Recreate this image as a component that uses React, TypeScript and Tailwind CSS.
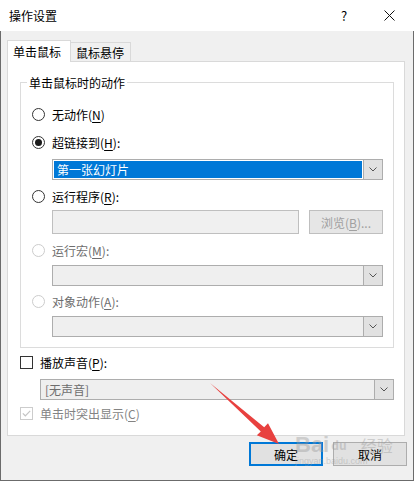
import React from 'react';

const Acc = ({ k }: { k: string }) => <span className="underline underline-offset-[2px]">{k}</span>;

function Radio({ checked, disabled }: { checked?: boolean; disabled?: boolean }) {
  return (
    <span
      className={
        'w-[13px] h-[13px] rounded-full border bg-white flex items-center justify-center shrink-0 ' +
        (disabled ? 'border-[#cccccc]' : 'border-[#333333]')
      }
    >
      {checked && <span className="w-[7px] h-[7px] rounded-full bg-[#1a1a1a]" />}
    </span>
  );
}

function Checkbox({ checked, disabled }: { checked?: boolean; disabled?: boolean }) {
  return (
    <span
      className={
        'w-[13px] h-[13px] border bg-white flex items-center justify-center shrink-0 ' +
        (disabled ? 'border-[#cccccc]' : 'border-[#333333]')
      }
    >
      {checked && (
        <svg width="9" height="7" viewBox="0 0 9 7">
          <path d="M0.8 3.4 L3.3 5.8 L8.2 0.8" fill="none" stroke={disabled ? '#c4c4c4' : '#333'} strokeWidth="1.2" />
        </svg>
      )}
    </span>
  );
}

function Chevron() {
  return (
    <svg width="8" height="5" viewBox="0 0 8 5">
      <path d="M0.5 0.5 L4 4 L7.5 0.5" fill="none" stroke="#555" strokeWidth="1" />
    </svg>
  );
}

function Combo({ text, selected, disabled }: { text?: string; selected?: boolean; disabled?: boolean }) {
  return (
    <div className="flex h-[21px] border border-[#adadad]">
      <div className={'flex-1 p-px ' + (disabled ? 'bg-[#efefef]' : 'bg-white')}>
        {text && (
          <div
            className={
              'h-full flex items-center pl-[3px] ' +
              (selected ? 'bg-[#0078d7] text-white' : 'text-[#6d6d6d]')
            }
          >
            {text}
          </div>
        )}
      </div>
      <div className="w-[19px] bg-[#e1e1e1] border-l border-[#adadad] flex items-center justify-center">
        <Chevron />
      </div>
    </div>
  );
}

function RadioRow({ label, k, checked, disabled, colon = true }: { label: string; k: string; checked?: boolean; disabled?: boolean; colon?: boolean }) {
  return (
    <div className={'flex items-center h-[20px] gap-[7px] ' + (disabled ? 'text-[#6d6d6d]' : '')}>
      <Radio checked={checked} disabled={disabled} />
      <span>
        {label}(<Acc k={k} />){colon ? ':' : ''}
      </span>
    </div>
  );
}

export default function App() {
  return (
    <div className="w-[414px] h-[481px] relative flex flex-col bg-[#f0f0f0] overflow-hidden text-[12px] leading-[17px] text-black font-['Noto_Sans_CJK_SC','Noto_Sans',sans-serif]">
      {/* title bar */}
      <div className="h-[31px] bg-white flex items-center pl-[9px] shrink-0">
        <span className="flex-1">操作设置</span>
        <span className="w-[10px] text-[13px] mr-[33px]">?</span>
        <svg width="11" height="11" viewBox="0 0 11 11" className="mr-[19px]">
          <path d="M0.5 0.5 L10.5 10.5 M10.5 0.5 L0.5 10.5" stroke="#111" strokeWidth="1" />
        </svg>
      </div>

      <div className="flex-1 flex flex-col border-l border-r border-b border-[#6b6b6b] pt-[9px] pl-[6px] pr-[8px]">
        {/* tabs */}
        <div className="flex items-end h-[22px] relative z-10 -mb-px">
          <div className="h-[22px] w-[64px] bg-white border border-b-0 border-[#d9d9d9] pl-[5px] flex items-center">
            单击鼠标
          </div>
          <div className="h-[20px] w-[60px] bg-[#f0f0f0] border-y border-r border-[#d9d9d9] pl-[5px] flex items-center">
            鼠标悬停
          </div>
        </div>

        {/* panel */}
        <div className="bg-white border border-[#d9d9d9] pt-[20px] pl-[12px] pr-[10px] pb-[12px]">
          <div className="relative border border-[#dcdcdc] pt-[21px] pl-[11px] pr-[10px] pb-[10px]">
            <span className="absolute -top-[9px] left-[6px] bg-white px-[2px]">单击鼠标时的动作</span>

            <RadioRow label="无动作" k="N" colon={false} />
            <div className="mt-[8px]">
              <RadioRow label="超链接到" k="H" checked />
            </div>
            <div className="mt-[7px] ml-[20px]">
              <Combo text="第一张幻灯片" selected />
            </div>
            <div className="mt-[6px]">
              <RadioRow label="运行程序" k="R" />
            </div>
            <div className="mt-[4px] ml-[20px] flex gap-[10px] h-[24px]">
              <div className="flex-1 border border-[#bfbfbf] bg-[#f0f0f0]" />
              <div className="w-[74px] border border-[#bfbfbf] bg-[#e6e6e6] flex items-center justify-center text-[#a0a0a0]">
                浏览(<Acc k="B" />)...
              </div>
            </div>
            <div className="mt-[6px]">
              <RadioRow label="运行宏" k="M" disabled />
            </div>
            <div className="mt-[5px] ml-[20px]">
              <Combo disabled />
            </div>
            <div className="mt-[5px]">
              <RadioRow label="对象动作" k="A" disabled />
            </div>
            <div className="mt-[5px] ml-[20px]">
              <Combo disabled />
            </div>
          </div>

          <div className="mt-[4px] flex items-center h-[20px] gap-[7px]">
            <Checkbox />
            <span>
              播放声音(<Acc k="P" />):
            </span>
          </div>
          <div className="mt-[7px] ml-[20px]">
            <Combo text="[无声音]" disabled />
          </div>
          <div className="mt-[3px] flex items-center h-[20px] gap-[7px] text-[#838383]">
            <Checkbox checked disabled />
            <span>
              单击时突出显示(<Acc k="C" />)
            </span>
          </div>
        </div>

        {/* buttons */}
        <div className="flex justify-end gap-[10px] mt-[6px] -mr-[2px]">
          <div className="w-[74px] h-[24px] border-2 border-[#0078d7] bg-[#e1e1e1] flex items-center justify-center">
            确定
          </div>
          <div className="w-[74px] h-[24px] border border-[#adadad] bg-[#e1e1e1] flex items-center justify-center">
            取消
          </div>
        </div>
      </div>

      {/* watermark */}
      <div className="absolute left-[295px] top-[434px] pointer-events-none opacity-40 text-[#9a9a9a] flex flex-col items-start">
        <div className="flex items-end leading-[22px]">
          <span className="text-[22px] font-bold font-['Liberation_Sans',sans-serif]">Bai</span>
          <span className="ml-[2px] text-[12px] font-bold">du</span>
          <span className="ml-[14px] text-[16px]">经验</span>
        </div>
        <span className="text-[9px] leading-[10px] font-['Liberation_Sans',sans-serif]">jingyan.baidu.com</span>
      </div>

      {/* annotation arrow */}
      <svg className="absolute left-0 top-0 pointer-events-none" width="414" height="481" viewBox="0 0 414 481">
        <polygon
          points="210,383 264.2,427.2 268,423.2 279,444 256.8,435.2 260.8,431.4"
          fill="#e8413f"
        />
      </svg>
    </div>
  );
}
